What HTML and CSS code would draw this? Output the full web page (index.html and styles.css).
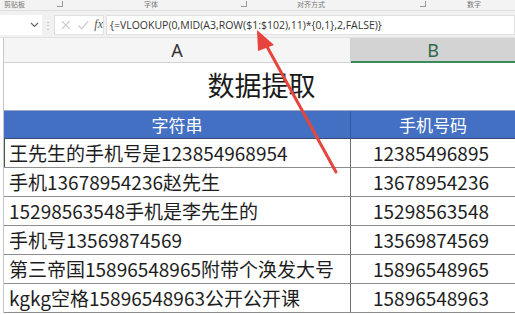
FILE: index.html
```html
<!DOCTYPE html>
<html lang="zh-CN">
<head>
  <meta charset="UTF-8">
  <title>数据提取</title>
  <link rel="stylesheet" href="styles.css">
</head>
<body>

  <div class="ribbon">
    <span class="group g-clip">剪贴板</span>
    <span class="launcher l1"></span>
    <span class="group g-font">字体</span>
    <span class="launcher l2"></span>
    <span class="group g-align">对齐方式</span>
    <span class="launcher l3"></span>
    <span class="group g-num">数字</span>
  </div>

  <div class="formula-bar">
    <div class="name-box">
      <svg class="chev" width="9" height="6" viewBox="0 0 9 6"><path d="M1 1 L4.5 4.5 L8 1" fill="none" stroke="#666" stroke-width="1.2"/></svg>
    </div>
    <div class="grip">⋮</div>
    <div class="fx-box">
      <svg width="12" height="12" viewBox="0 0 12 12"><path d="M2 2 L10 10 M10 2 L2 10" stroke="#c8c8c8" stroke-width="1.2"/></svg>
      <svg width="13" height="12" viewBox="0 0 13 12"><path d="M1.5 6.5 L5 10 L11.5 2" fill="none" stroke="#c8c8c8" stroke-width="1.2"/></svg>
      <span class="fx">fx</span>
    </div>
    <div class="formula">{=VLOOKUP(0,MID(A3,ROW($1:$102),11)*{0,1},2,FALSE)}</div>
  </div>

  <div class="sheet">
    <div class="col-head col-a">A</div>
    <div class="col-head col-b">B</div>

    <div class="title">数据提取</div>

    <div class="head-cell">字符串</div>
    <div class="head-cell num">手机号码</div>

    <div class="cell active">王先生的手机号是123854968954</div>
    <div class="cell num">12385496895</div>
    <div class="cell">手机13678954236赵先生</div>
    <div class="cell num">13678954236</div>
    <div class="cell">15298563548手机是李先生的</div>
    <div class="cell num">15298563548</div>
    <div class="cell">手机号13569874569</div>
    <div class="cell num">13569874569</div>
    <div class="cell">第三帝国15896548965附带个涣发大号</div>
    <div class="cell num">15896548965</div>
    <div class="cell">kgkg空格15896548963公开公开课</div>
    <div class="cell num">15896548963</div>
  </div>

  <!-- pointer from the result column up to the formula -->
  <svg class="arrow" width="515" height="315" viewBox="0 0 515 315">
    <line x1="336" y1="172" x2="265" y2="43" stroke="#e6443c" stroke-width="3" stroke-linecap="round"/>
    <polygon points="257,30 274,45 258,51" fill="#e6443c"/>
  </svg>

</body>
</html>
```

FILE: styles.css
```css
body {
  margin: 0;
  width: 515px;
  height: 315px;
  overflow: hidden;
  background: #fff;
  font-family: "Noto Sans CJK SC", "Noto Sans", sans-serif;
  position: relative;
}

.ribbon {
  height: 10px;
  background: #f3f3f3;
  border-bottom: 1px solid #dedede;
  position: relative;
  overflow: hidden;
  font-size: 7px;
  line-height: 8px;
  color: #777;
}

.group, .launcher {
  position: absolute;
  top: 0;
}

.g-clip { left: 4px; }
.g-font { left: 144px; }
.g-align { left: 297px; }
.g-num { left: 467px; }

.launcher {
  top: 1px;
  width: 5px;
  height: 5px;
  border-right: 1px solid #999;
  border-bottom: 1px solid #999;
}
.l1 { left: 57px; }
.l2 { left: 241px; }
.l3 { left: 420px; }

.formula-bar {
  height: 25px;
  background: #f1f1f1;
  display: flex;
  align-items: center;
  padding-top: 1px;
  border-bottom: 1px solid #e2e2e2;
}

.name-box {
  width: 42px;
  height: 20px;
  background: #fff;
  display: flex;
  align-items: center;
  justify-content: flex-end;
  padding-right: 3px;
  box-sizing: border-box;
}

.grip {
  width: 12px;
  text-align: center;
  color: #aaa;
  font-size: 10px;
}

.fx-box {
  width: 50px;
  height: 20px;
  background: #fff;
  border: 1px solid #e0e0e0;
  box-sizing: border-box;
  display: flex;
  align-items: center;
  gap: 5px;
  padding-left: 5px;
}

.fx {
  font-family: "Liberation Serif", serif;
  font-style: italic;
  font-size: 12px;
  color: #555;
}

.formula {
  flex: 1;
  height: 20px;
  margin-left: 2px;
  background: #fff;
  border: 1px solid #e0e0e0;
  box-sizing: border-box;
  font-size: 10.5px;
  line-height: 18px;
  padding-left: 3px;
  color: #333;
  white-space: nowrap;
  font-family: "Open Sans", sans-serif;
}

.sheet {
  display: grid;
  grid-template-columns: 347px 165px;
  margin-left: 3px;
  border-left: 1px solid #c9c9c9;
}

.col-head {
  height: 24px;
  line-height: 24px;
  text-align: center;
  font-size: 18px;
  color: #333;
  background: #f5f5f5;
  border-bottom: 1px solid #d2d2d2;
  border-right: 1px solid #d2d2d2;
  font-family: "Noto Sans", sans-serif;
}

.col-b {
  background: #d3d3d3;
  color: #2d6a4a;
  border-bottom: 2px solid #3a8a5e;
  height: 23px;
}

.title {
  grid-column: 1 / 3;
  height: 47px;
  line-height: 44px;
  text-align: center;
  font-size: 27px;
  color: #1a1a1a;
  padding-left: 3px;
  border-bottom: 1px solid #9ba9c6;
}

.head-cell {
  height: 27px;
  line-height: 27px;
  background: #4470c3;
  color: #fff;
  text-align: center;
  font-size: 17px;
  border-right: 1px solid #35589a;
  border-bottom: 1px solid #3a4d6e;
}

.cell {
  height: 28px;
  line-height: 28px;
  font-size: 19px;
  color: #1e1e1e;
  padding-left: 5px;
  white-space: nowrap;
  overflow: hidden;
  border-bottom: 1px solid #8d8d8d;
  border-right: 1px solid #6f6f6f;
}

.cell.num {
  padding-left: 0;
  text-align: center;
  padding-right: 4px;
}

.active {
  box-shadow: inset 1px 0 0 #3c5a47;
}

.arrow {
  position: absolute;
  left: 0;
  top: 0;
  pointer-events: none;
}
```
